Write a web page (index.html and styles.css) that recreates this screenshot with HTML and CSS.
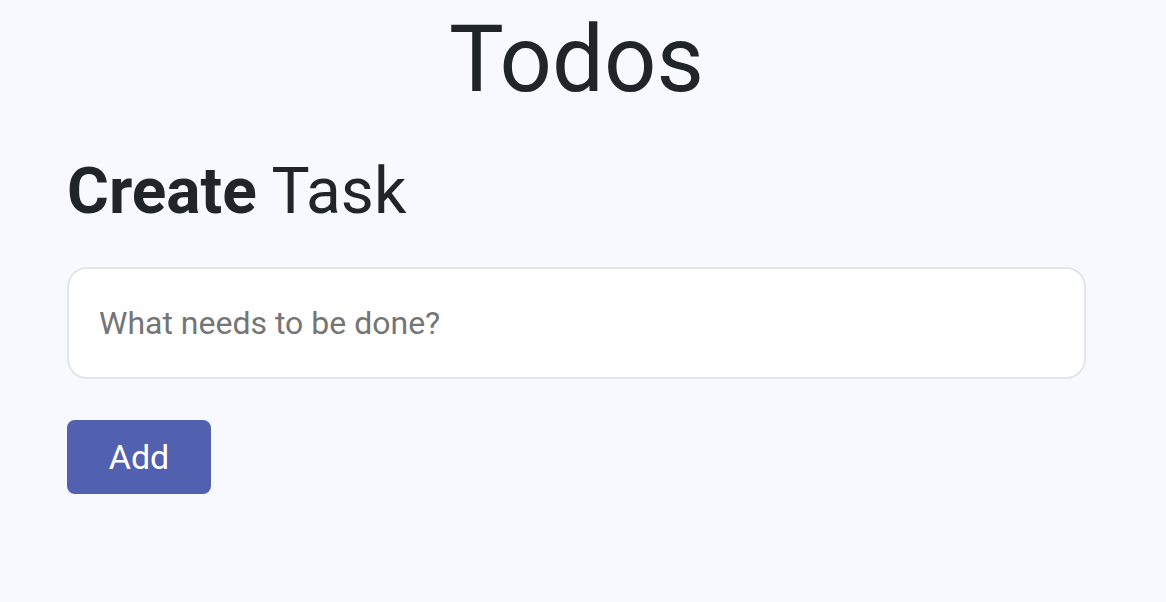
FILE: index.html
```html
<!DOCTYPE html>
<html lang="en">
<head>
<meta charset="utf-8">
<title>Todos</title>
<link rel="stylesheet" href="styles.css">
</head>
<body>
<div class="page">
  <h1 class="title">Todos</h1>
  <h2 class="subtitle"><strong>Create</strong> Task</h2>
  <form class="create-form">
    <input class="task-input" type="text" placeholder="What needs to be done?">
    <button class="add-btn" type="button">Add</button>
  </form>
</div>
</body>
</html>
```

FILE: styles.css
```css
html, body {
  margin: 0;
  padding: 0;
  background: #f8f9fe;
  height: 100%;
}
body {
  font-family: Roboto, "Liberation Sans", sans-serif;
  color: #212529;
}
.page {
  width: 1153px;
  box-sizing: border-box;
  padding: 0 67px;
}
.title {
  margin: 0;
  padding-top: 6px;
  text-align: center;
  font-weight: 400;
  font-size: 92px;
  line-height: 108px;
}
.subtitle {
  margin: 40px 0 0 0;
  font-weight: 400;
  font-size: 64px;
  line-height: 76px;
}
.subtitle strong {
  font-weight: 700;
}
.create-form {
  display: flex;
  flex-direction: column;
  align-items: flex-start;
  gap: 41px;
  margin-top: 37px;
}
.task-input {
  box-sizing: border-box;
  width: 100%;
  height: 112px;
  padding: 0 30px;
  border: 2px solid #e4e5ea;
  border-radius: 20px;
  background: #fff;
  font-family: Roboto, "Liberation Sans", sans-serif;
  font-size: 32px;
  color: #212529;
  outline: none;
}
.task-input::placeholder {
  color: #757575;
}
.add-btn {
  box-sizing: border-box;
  width: 144px;
  height: 74px;
  border: none;
  border-radius: 8px;
  background: #5161b0;
  color: #fff;
  font-family: Roboto, "Liberation Sans", sans-serif;
  font-size: 34px;
  cursor: pointer;
}
```
